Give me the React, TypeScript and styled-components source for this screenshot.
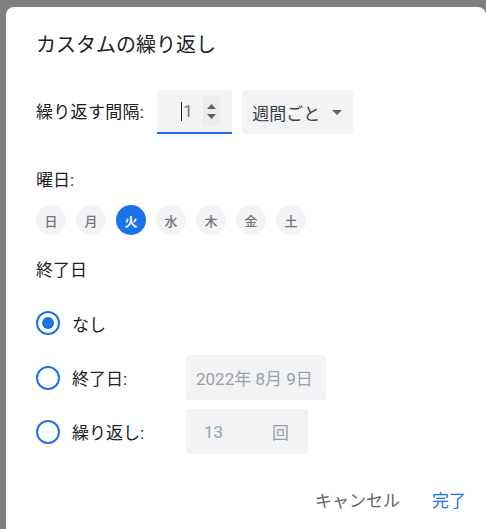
import React from "react";
import styled, { createGlobalStyle } from "styled-components";

const Global = createGlobalStyle`
  html, body { margin: 0; padding: 0; }
  body {
    background: #7f7f7f;
    font-family: Roboto, "Noto Sans CJK JP", sans-serif;
    overflow: hidden;
  }
`;

const Dialog = styled.div`
  margin: 7px 0 0 6px;
  width: 480px;
  height: 540px;
  background: #fff;
  border-radius: 8px 8px 0 0;
  box-sizing: border-box;
  padding: 24px 0 0 30px;
  display: flex;
  flex-direction: column;
  color: #3c4043;
`;

const Title = styled.h1`
  margin: 0;
  font-size: 20px;
  line-height: 28px;
  font-weight: 400;
  color: #202124;
`;

const Row = styled.div`
  display: flex;
  align-items: center;
  margin-top: 31px;
  height: 44px;
`;

const Label = styled.span`
  font-size: 17px;
  line-height: 24px;
  color: #202124;
  margin-right: 13px;
  letter-spacing: 0.3px;
`;

const NumberBox = styled.div`
  width: 75px;
  height: 44px;
  box-sizing: border-box;
  background: #f1f3f4;
  border-radius: 4px 4px 0 0;
  border-bottom: 2px solid #1a73e8;
  display: flex;
  align-items: center;
  padding-left: 24px;
  font-size: 17px;
  color: #3c4043;
`;

const Caret = styled.span`
  display: inline-block;
  width: 1px;
  height: 19px;
  background: #202124;
  margin-right: 1px;
`;

const NumText = styled.span`
  color: #70757a;
  flex: 1;
`;

const Spinner = styled.div`
  width: 17px;
  height: 30px;
  margin-right: 12px;
  background: #ebedee;
  display: flex;
  flex-direction: column;
  align-items: center;
  justify-content: center;
  gap: 5px;
`;

const Select = styled.div`
  margin-left: 10px;
  width: 111px;
  height: 44px;
  box-sizing: border-box;
  background: #f1f3f4;
  border-radius: 4px;
  display: flex;
  align-items: center;
  padding-left: 10px;
  font-size: 17px;
  color: #3c4043;
`;

const SelectText = styled.span`
  flex: 1;
`;

const SectionLabel = styled.div<{ $top: number }>`
  margin-top: ${(p) => p.$top}px;
  font-size: 17px;
  line-height: 24px;
  color: #202124;
`;

const Days = styled.div`
  display: flex;
  gap: 10px;
  margin-top: 13px;
`;

const Day = styled.div<{ $on?: boolean }>`
  width: 30px;
  height: 30px;
  border-radius: 50%;
  background: ${(p) => (p.$on ? "#1a73e8" : "#f1f3f4")};
  color: ${(p) => (p.$on ? "#fff" : "#70757a")};
  font-size: 13px;
  font-weight: ${(p) => (p.$on ? 700 : 500)};
  display: flex;
  align-items: center;
  justify-content: center;
`;

const Options = styled.div`
  margin-top: 19px;
  display: flex;
  flex-direction: column;
  gap: 10px;
`;

const OptionRow = styled.div`
  display: grid;
  grid-template-columns: 150px auto;
  align-items: center;
  height: 44px;
`;

const RadioLabel = styled.div`
  display: flex;
  align-items: center;
  gap: 12px;
  font-size: 17px;
  color: #202124;
`;

const Radio = styled.span<{ $on?: boolean }>`
  width: 24px;
  height: 24px;
  box-sizing: border-box;
  border: 2px solid #1a73e8;
  border-radius: 50%;
  display: flex;
  align-items: center;
  justify-content: center;
  &::after {
    content: "";
    width: 12px;
    height: 12px;
    border-radius: 50%;
    background: ${(p) => (p.$on ? "#1a73e8" : "transparent")};
  }
`;

const Field = styled.div<{ $w: number }>`
  width: ${(p) => p.$w}px;
  height: 45px;
  box-sizing: border-box;
  background: #f1f3f4;
  border-radius: 4px;
  display: flex;
  align-items: center;
  padding: 0 10px;
  font-size: 17px;
  color: #9aa0a6;
`;

const CountNum = styled.span`
  margin-left: 8px;
  flex: 1;
`;

const CountUnit = styled.span`
  margin-right: 9px;
`;

const Footer = styled.div`
  display: flex;
  justify-content: flex-end;
  gap: 16px;
  margin-top: 36px;
  padding-right: 12px;
`;

const Button = styled.button<{ $primary?: boolean }>`
  border: none;
  background: transparent;
  font-family: inherit;
  font-size: 17px;
  line-height: 24px;
  padding: 0 8px;
  color: ${(p) => (p.$primary ? "#1a73e8" : "#5f6368")};
  cursor: pointer;
`;

const days = ["日", "月", "火", "水", "木", "金", "土"];

export default function App() {
  return (
    <>
      <Global />
      <Dialog>
        <Title>カスタムの繰り返し</Title>
        <Row>
          <Label>繰り返す間隔:</Label>
          <NumberBox>
            <Caret />
            <NumText>1</NumText>
            <Spinner>
              <svg width="9" height="5" viewBox="0 0 9 5">
                <path d="M0 5 L4.5 0 L9 5 Z" fill="#5f6368" />
              </svg>
              <svg width="9" height="5" viewBox="0 0 9 5">
                <path d="M0 0 L4.5 5 L9 0 Z" fill="#5f6368" />
              </svg>
            </Spinner>
          </NumberBox>
          <Select>
            <SelectText>週間ごと</SelectText>
            <svg width="10" height="5" viewBox="0 0 10 5" style={{ marginRight: 11 }}>
              <path d="M0 0 L5 5 L10 0 Z" fill="#5f6368" />
            </svg>
          </Select>
        </Row>
        <SectionLabel $top={34}>曜日:</SectionLabel>
        <Days>
          {days.map((d, i) => (
            <Day key={d} $on={i === 2}>
              {d}
            </Day>
          ))}
        </Days>
        <SectionLabel $top={23}>終了日</SectionLabel>
        <Options>
          <OptionRow>
            <RadioLabel>
              <Radio $on />
              なし
            </RadioLabel>
          </OptionRow>
          <OptionRow>
            <RadioLabel>
              <Radio />
              終了日:
            </RadioLabel>
            <Field $w={140}>2022年 8月 9日</Field>
          </OptionRow>
          <OptionRow>
            <RadioLabel>
              <Radio />
              繰り返し:
            </RadioLabel>
            <Field $w={122}>
              <CountNum>13</CountNum>
              <CountUnit>回</CountUnit>
            </Field>
          </OptionRow>
        </Options>
        <Footer>
          <Button>キャンセル</Button>
          <Button $primary>完了</Button>
        </Footer>
      </Dialog>
    </>
  );
}
